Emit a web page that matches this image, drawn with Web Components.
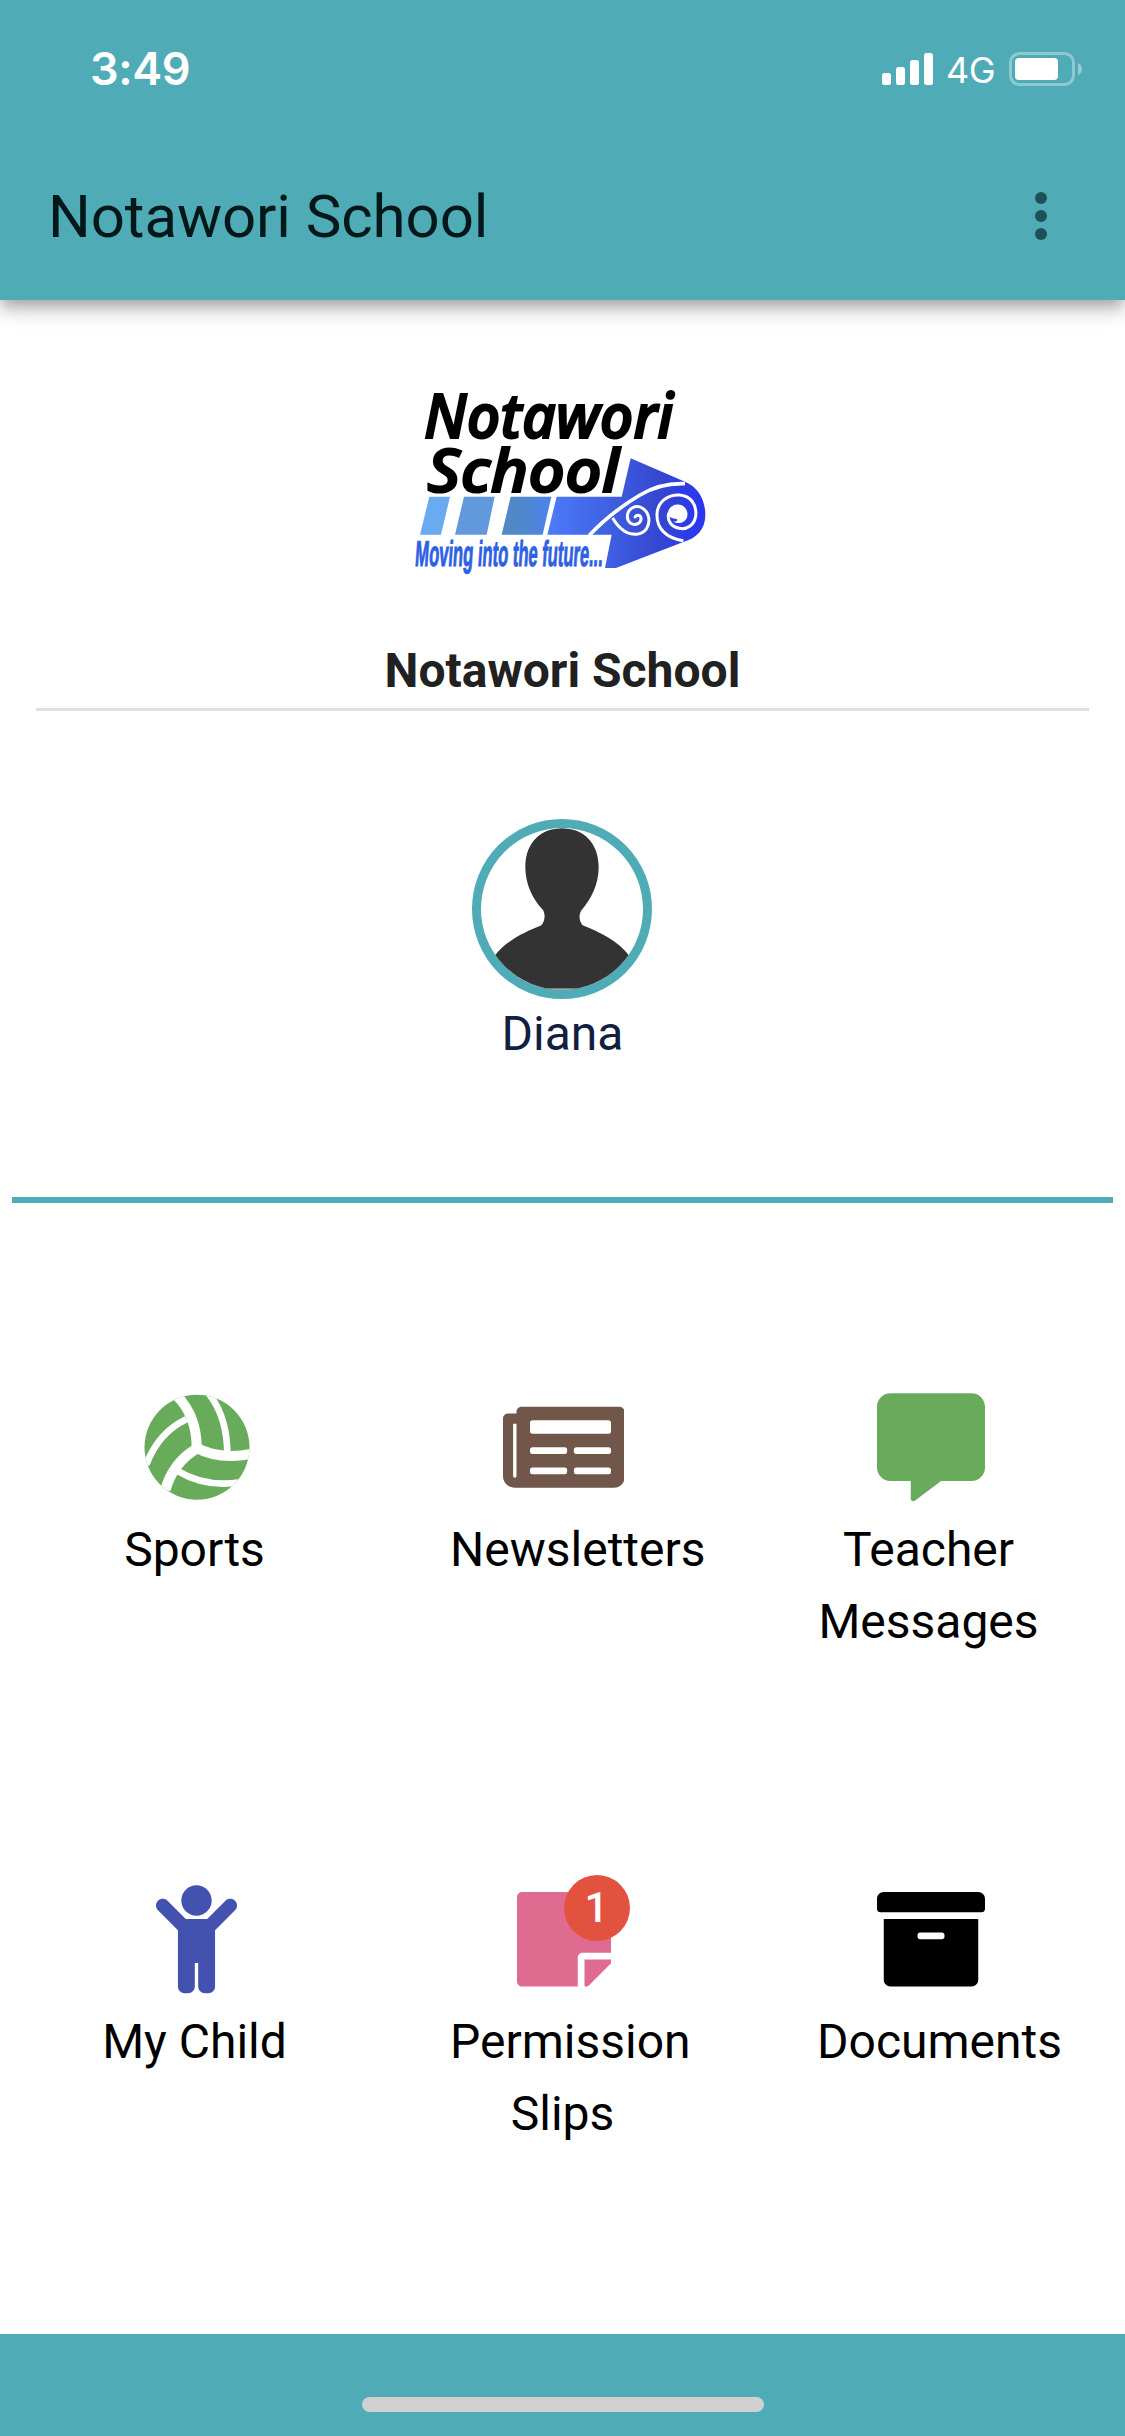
<!DOCTYPE html>
<html lang="en">
<head>
<meta charset="utf-8">
<title>Notawori School</title>
<style>
  html, body { margin: 0; background: #fff; }
  body { font-family: Roboto, sans-serif; --teal: #4facb7; }
</style>
</head>
<body>
<school-app></school-app>
<script>
const define = (name, html) => customElements.define(name, class extends HTMLElement {
  constructor() {
    super();
    this.attachShadow({ mode: 'open' }).innerHTML = html;
  }
});

define('status-bar', `
<style>
  :host { display: flex; justify-content: space-between; height: 132px; box-sizing: border-box; padding: 44px 42px 0 90px; color: #fff; font-family: Inter, sans-serif; }
  time { font-size: 45px; line-height: 50px; font-weight: 600; letter-spacing: -.4px; }
  .right { display: flex; height: 50px; align-items: center; }
  .net { font-size: 36px; line-height: 50px; width: 63px; padding: 1px 0 0 12px; letter-spacing: -.5px; }
  svg { display: block; }
</style>
<time>3:49</time>
<div class="right">
  <svg width="52" height="34" viewBox="0 0 52 34" fill="#fff"><rect y="21" x="0" width="9" height="12" rx="2.5"/><rect x="14" y="15" width="9" height="18" rx="2.5"/><rect x="28" y="8" width="9" height="25" rx="2.5"/><rect x="42" y="1" width="9" height="32" rx="2.5"/></svg>
  <span class="net">4G</span>
  <svg width="74" height="34" viewBox="0 0 74 34" fill="#fff"><rect x="1.5" y="1.5" width="63" height="31" rx="9" fill="none" stroke="#fff" stroke-opacity=".35" stroke-width="3"/><rect x="6" y="6" width="43" height="22" rx="4"/><path d="M69 11q4 2 4 6t-4 6z" opacity=".4"/></svg>
</div>`);

define('app-bar', `
<style>
  :host { display: block; position: relative; height: 300px; background: var(--teal); box-shadow: 0 6px 12px -3px rgba(0,0,0,.2), 0 12px 15px 0 rgba(0,0,0,.14), 0 3px 30px 0 rgba(0,0,0,.12); }
  .row { display: flex; justify-content: space-between; align-items: center; height: 168px; padding: 0 78px 0 48px; }
  h1 { margin: 2px 0 0; font-size: 60px; line-height: 96px; font-weight: 400; letter-spacing: -.08px; color: #04181a; }
  svg { display: block; }
</style>
<status-bar></status-bar>
<div class="row"><h1><slot></slot></h1>
<svg width="12" height="48" fill="#205056"><circle cx="6" cy="6" r="6"/><circle cx="6" cy="24" r="6"/><circle cx="6" cy="42" r="6"/></svg></div>`);

define('school-logo', `
<style>:host { display: block; width: 340px; height: 220px; } svg { display: block; overflow: visible; }</style>
<svg width="340" height="220" viewBox="0 0 1020 660">
  <defs>
    <linearGradient id="g"><stop offset="0" stop-color="#4c7bfa"/><stop offset=".35" stop-color="#4063e4"/><stop offset=".7" stop-color="#3547d0"/><stop offset="1" stop-color="#2a35f6"/></linearGradient>
    <linearGradient id="b"><stop offset="0" stop-color="#5288c2"/><stop offset=".5" stop-color="#5088d0"/><stop offset="1" stop-color="#4d82ee"/></linearGradient>
  </defs>
  <g font-family="'Open Sans', 'Noto Sans', sans-serif" font-style="italic" font-weight="600" fill="#000" stroke="#000" stroke-width="6">
    <text x="102" y="205" font-size="183" textLength="748" lengthAdjust="spacingAndGlyphs">Notawori</text>
    <text x="112" y="365" font-size="181" textLength="576" lengthAdjust="spacingAndGlyphs">School</text>
  </g>
  <path d="M118 380H180L153 494H90Z" fill="#69aaf0"/>
  <path d="M222 380H314L290 494H195Z" fill="#6298dc"/>
  <path d="M362 380H484L458 494H335Z" fill="url(#b)"/>
  <path d="M500 380H695L722 265L880 333C925 350 946 390 946 435C946 478 920 505 880 516L678 594H645L665 494H472Z" fill="url(#g)"/>
  <g fill="none" stroke="#fff" stroke-width="9">
    <path d="M598 496C650 440 700 405 750 375Q812 338 885 341" stroke-width="11"/>
    <path d="M668 444C690 482 715 494 740 493C767 490 780 468 776 442C770 416 748 405 730 412C710 420 706 447 722 460C737 469 755 459 753 443C749 432 735 434 735 445"/>
    <path d="M880 512C827 504 799 474 801 432C803 394 834 374 868 375C902 377 921 404 917 438C913 466 890 480 868 475C841 470 830 448 837 428"/>
  </g>
  <path d="M834 430C836 396 886 394 892 428C896 452 872 466 850 455C864 455 866 447 856 446C846 446 838 442 834 430Z" fill="#fff"/>
  <text x="77" y="588" transform="skewX(-4) translate(38 0)" font-family="'Liberation Sans Narrow', 'Liberation Sans', sans-serif" font-weight="700" font-size="108" fill="#2e60e4" stroke="#2e60e4" stroke-width="3" textLength="563" lengthAdjust="spacingAndGlyphs">Moving into the future...</text>
</svg>`);

define('school-head', `
<style>
  :host { display: flex; flex-direction: column; align-items: center; margin: 0 36px; padding-top: 70px; border-bottom: 3px solid #dfdfdf; height: 338px; }
  school-logo { margin-left: -5px; }
  h2 { margin: 45px 0 0; font-size: 48px; line-height: 72px; font-weight: 700; color: #212121; }
</style>
<school-logo></school-logo><h2><slot></slot></h2>`);

define('child-avatar', `
<style>
  :host { display: flex; flex-direction: column; align-items: center; height: 378px; padding-top: 108px; margin: 0 12px; border-bottom: 6px solid var(--teal); }
  .ring { width: 162px; height: 162px; border: 9px solid var(--teal); border-radius: 50%; overflow: hidden; margin-right: 1px; }
  svg { display: block; }
  span { font-size: 48px; line-height: 70px; color: #12203f; }
</style>
<div class="ring"><svg width="162" height="162" viewBox="93 84 486 486"><path fill="#333" d="M336 85C399 85 446 127 446 202C446 256 421 300 395 330C386 342 386 362 398 376C445 395 505 422 540 470L570 568H100L132 470C167 422 227 395 274 376C286 362 286 342 279 330C250 300 226 256 226 202C226 127 273 85 336 85Z"/><path d="M250 567H422" stroke="#999" stroke-width="5"/></svg></div>
<span><slot></slot></span>`);

const glyphs = {
  ball: [324, 324, '190 70 324 324', '<defs><clipPath id="c"><circle cx="352" cy="232" r="157.5"/></clipPath></defs><g clip-path="url(#c)"><path d="M190 70h324v324H190z"/><g fill="none" stroke="#fff"><path d="M290 76Q352 138 351 236" stroke-width="30"/><path d="M351 236Q280 278 257 360" stroke-width="31"/><path d="M347 232Q420 272 520 251" stroke-width="30"/><path d="M320 148Q236 188 200 284" stroke-width="20"/><path d="M388 72Q443 142 443 254" stroke-width="20"/><path d="M293 303Q378 354 482 337" stroke-width="20"/></g></g>'],
  news: [576, 512, '0 0 576 512', '<path fill-rule="evenodd" d="M552 64H88c-13.3 0-24 10.7-24 24v8H24c-13.3 0-24 10.7-24 24v272c0 30.9 25.100 56 56 56h472c26.500 0 48-21.500 48-48V88c0-13.300-10.700-24-24-24zM56 400a8 8 0 0 1-8-8V144h16v248a8 8 0 0 1-8 8z"/><g fill="#fff"><rect x="128" y="128" width="384" height="64" rx="12"/><rect x="128" y="256" width="176" height="32" rx="12"/><rect x="336" y="256" width="176" height="32" rx="12"/><rect x="128" y="352" width="176" height="32" rx="12"/><rect x="336" y="352" width="176" height="32" rx="12"/></g>'],
  chat: [512, 512, '0 0 512 512', '<path d="M448 0H64C28.700 0 0 28.700 0 64v288c0 35.300 28.700 64 64 64h96v84c0 9.800 11.200 15.500 19.100 9.700L304 416h144c35.300 0 64-28.700 64-64V64c0-35.300-28.700-64-64-64z"/>'],
  child: [384, 512, '0 0 384 512', '<path d="M120 72c0-39.765 32.235-72 72-72s72 32.235 72 72c0 39.764-32.235 72-72 72s-72-32.236-72-72zm254.627 1.373c-12.496-12.497-32.758-12.497-45.254 0L242.745 160H141.254L54.627 73.373c-12.496-12.497-32.758-12.497-45.254 0-12.497 12.497-12.497 32.758 0 45.255L104 213.254V480c0 17.673 14.327 32 32 32h16c17.673 0 32-14.327 32-32V368h16v112c0 17.673 14.327 32 32 32h16c17.673 0 32-14.327 32-32V213.254l94.627-94.627c12.497-12.497 12.497-32.757 0-45.254z"/>'],
  note: [448, 512, '0 0 448 512', '<path d="M312 320h136V56c0-13.300-10.700-24-24-24H24C10.700 32 0 42.700 0 56v400c0 13.300 10.700 24 24 24h264V344c0-13.200 10.800-24 24-24zm129 55l-98 98c-4.500 4.500-10.600 7-17 7h-6V352h128v6.100c0 6.300-2.500 12.400-7 16.900z"/>'],
  box: [512, 512, '0 0 512 512', '<path d="M32 448c0 17.700 14.300 32 32 32h384c17.700 0 32-14.300 32-32V160H32v288zm160-212c0-6.600 5.400-12 12-12h104c6.600 0 12 5.400 12 12v8c0 6.600-5.400 12-12 12H204c-6.600 0-12-5.400-12-12v-8zM480 32H32C14.300 32 0 46.300 0 64v48c0 8.800 7.200 16 16 16h480c8.800 0 16-7.200 16-16V64c0-17.700-14.300-32-32-32z"/>']
};

customElements.define('menu-tile', class extends HTMLElement {
  connectedCallback() {
    const [w, h, box, art] = glyphs[this.getAttribute('icon')];
    const badge = this.getAttribute('badge');
    this.attachShadow({ mode: 'open' }).innerHTML = `
<style>
  :host { display: block; padding: 0 71px; height: 492px; box-sizing: border-box; text-align: center; }
  .icon { position: relative; display: flex; justify-content: center; height: 121px; padding-left: 2px; }
  :host([icon="note"]) .icon { padding-left: 3px; }
  svg { display: block; height: 108.500px; flex: none; }
  .badge { position: absolute; left: 114px; top: -10px; width: 66px; height: 66px; border-radius: 50%; background: #e2523f; color: #fff; font-size: 42px; line-height: 65px; font-weight: 500; text-indent: -1px; }
  .label { margin: 0 1px 0 -1px; font-size: 48px; line-height: 72px; color: #000; }
  :host([icon="news"]) .label, :host([icon="note"]) .label, :host([icon="box"]) .label { margin: 0; }
</style>
<div class="icon"><svg width="${108 * w / h}" height="108" viewBox="${box}" fill="${this.getAttribute('tint')}">${art}</svg>${badge ? `<span class="badge">${badge}</span>` : ''}</div>
<div class="label"><slot></slot></div>`;
  }
});

define('menu-grid', `
<style>:host { display: grid; grid-template-columns: repeat(3, 367px); margin: 0 12px; padding-top: 190px; height: 941px; }</style>
<slot></slot>`);

define('home-bar', `
<style>
  :host { display: flex; justify-content: center; height: 102px; box-sizing: border-box; padding-top: 63px; background: var(--teal); }
  div { width: 402px; height: 15px; border-radius: 8px; background: #d0d0d0; margin-left: 1px; }
</style><div></div>`);

define('school-app', `
<style>:host { display: block; width: 1125px; height: 2436px; overflow: hidden; background: #fff; }</style>
<app-bar>Notawori School</app-bar>
<school-head>Notawori School</school-head>
<child-avatar>Diana</child-avatar>
<menu-grid>
  <menu-tile icon="ball" tint="#67ab5b">Sports</menu-tile>
  <menu-tile icon="news" tint="#71564a">Newsletters</menu-tile>
  <menu-tile icon="chat" tint="#67ab5b">Teacher Messages</menu-tile>
  <menu-tile icon="child" tint="#4351af">My Child</menu-tile>
  <menu-tile icon="note" tint="#df6b91" badge="1">Permission Slips</menu-tile>
  <menu-tile icon="box" tint="#000">Documents</menu-tile>
</menu-grid>
<home-bar></home-bar>`);
</script>
</body>
</html>
